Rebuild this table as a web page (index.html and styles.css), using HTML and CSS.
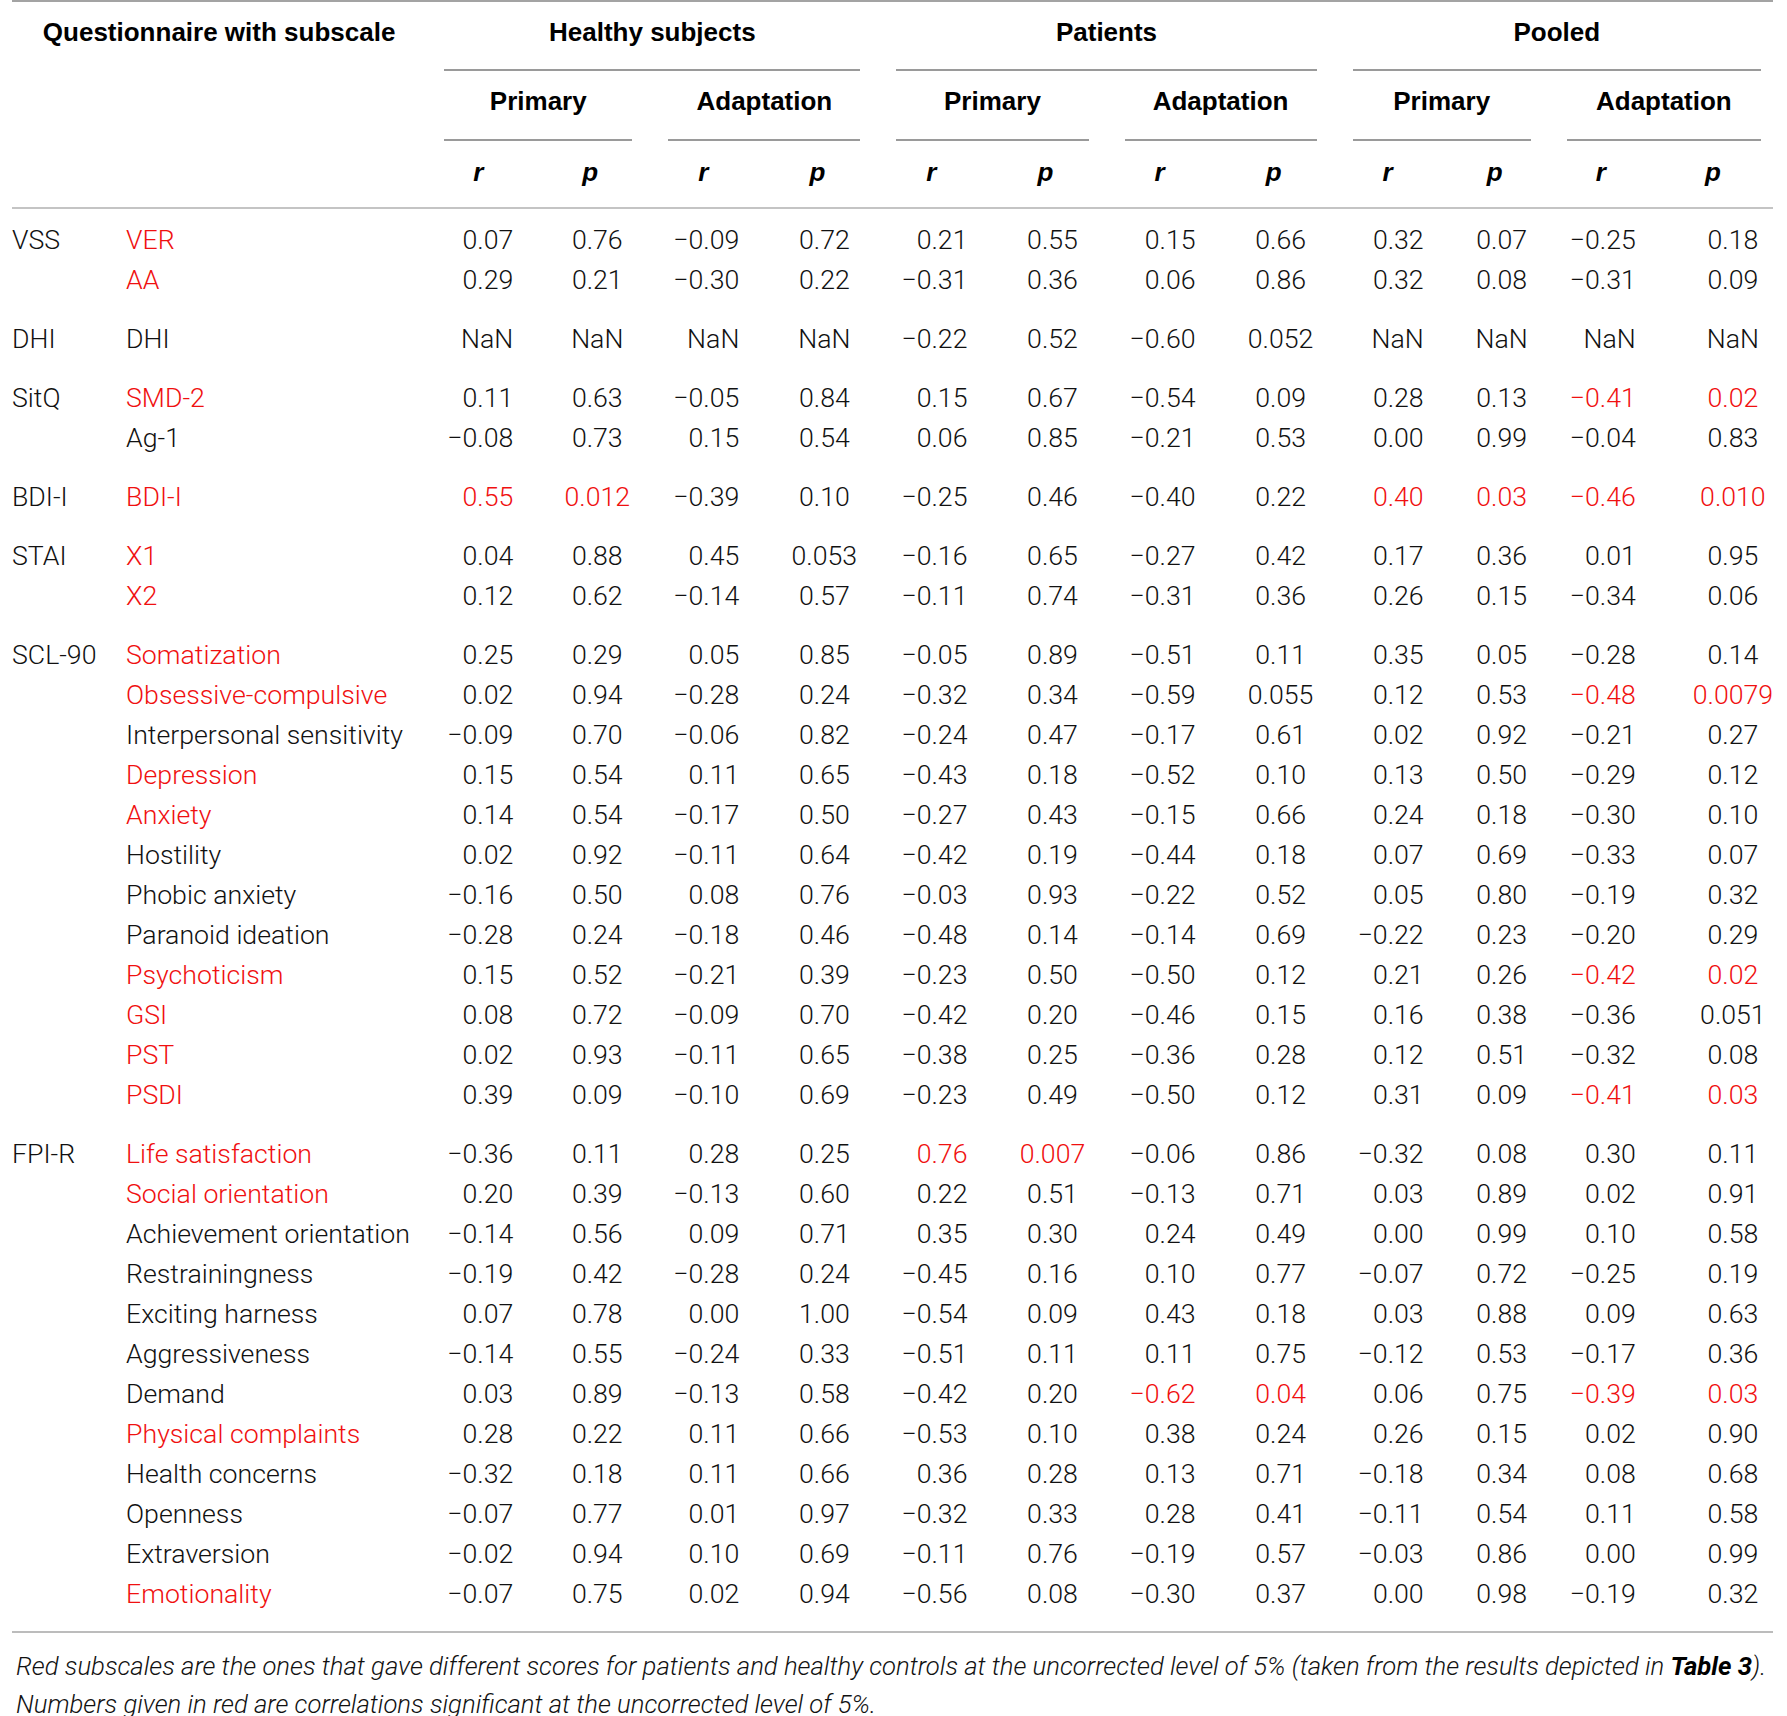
FILE: index.html
```html
<!DOCTYPE html>
<html lang="en">
<head>
    <meta charset="UTF-8">
    <meta name="viewport" content="width=device-width, initial-scale=1.0">
    <link rel="stylesheet" href="styles.css">
</head>
<body>

<!-- Correlation table -->
<table class="corr">
    <colgroup>
        <col style="width:114px"><col style="width:300px">
        <col style="width:104px"><col style="width:120px">
        <col style="width:106px"><col style="width:122px">
        <col style="width:106px"><col style="width:122px">
        <col style="width:106px"><col style="width:122px">
        <col style="width:106px"><col style="width:108px">
        <col style="width:104px"><col style="width:120px">
    </colgroup>
    <thead>
        <tr class="h1">
            <th colspan="2" class="title">Questionnaire with subscale</th>
            <th colspan="4"><div class="grp">Healthy subjects</div></th>
            <th colspan="4"><div class="grp">Patients</div></th>
            <th colspan="4"><div class="grp end">Pooled</div></th>
        </tr>
        <tr class="h2">
            <th colspan="2"></th>
            <th colspan="2"><div class="sub">Primary</div></th>
            <th colspan="2"><div class="sub">Adaptation</div></th>
            <th colspan="2"><div class="sub">Primary</div></th>
            <th colspan="2"><div class="sub">Adaptation</div></th>
            <th colspan="2"><div class="sub">Primary</div></th>
            <th colspan="2"><div class="sub end">Adaptation</div></th>
        </tr>
        <tr class="h3">
            <th></th><th></th>
            <th>r</th><th>p</th><th>r</th><th>p</th>
            <th>r</th><th>p</th><th>r</th><th>p</th>
            <th>r</th><th>p</th><th>r</th><th>p</th>
        </tr>
    </thead>
    <tbody>
        <tr class="first">
            <td class="q">VSS</td><td class="s hi">VER</td>
            <td class="r">0.07</td><td class="p">0.76</td><td class="r">&minus;0.09</td><td class="p">0.72</td>
            <td class="r">0.21</td><td class="p">0.55</td><td class="r">0.15</td><td class="p">0.66</td>
            <td class="r">0.32</td><td class="p">0.07</td><td class="r">&minus;0.25</td><td class="p">0.18</td>
        </tr>
        <tr>
            <td class="q"></td><td class="s hi">AA</td>
            <td class="r">0.29</td><td class="p">0.21</td><td class="r">&minus;0.30</td><td class="p">0.22</td>
            <td class="r">&minus;0.31</td><td class="p">0.36</td><td class="r">0.06</td><td class="p">0.86</td>
            <td class="r">0.32</td><td class="p">0.08</td><td class="r">&minus;0.31</td><td class="p">0.09</td>
        </tr>

        <tr class="gs">
            <td class="q">DHI</td><td class="s">DHI</td>
            <td class="r">NaN</td><td class="p">NaN</td><td class="r">NaN</td><td class="p">NaN</td>
            <td class="r">&minus;0.22</td><td class="p">0.52</td><td class="r">&minus;0.60</td><td class="p">0.052</td>
            <td class="r">NaN</td><td class="p">NaN</td><td class="r">NaN</td><td class="p">NaN</td>
        </tr>

        <tr class="gs">
            <td class="q">SitQ</td><td class="s hi">SMD-2</td>
            <td class="r">0.11</td><td class="p">0.63</td><td class="r">&minus;0.05</td><td class="p">0.84</td>
            <td class="r">0.15</td><td class="p">0.67</td><td class="r">&minus;0.54</td><td class="p">0.09</td>
            <td class="r">0.28</td><td class="p">0.13</td><td class="r hi">&minus;0.41</td><td class="p hi">0.02</td>
        </tr>
        <tr>
            <td class="q"></td><td class="s">Ag-1</td>
            <td class="r">&minus;0.08</td><td class="p">0.73</td><td class="r">0.15</td><td class="p">0.54</td>
            <td class="r">0.06</td><td class="p">0.85</td><td class="r">&minus;0.21</td><td class="p">0.53</td>
            <td class="r">0.00</td><td class="p">0.99</td><td class="r">&minus;0.04</td><td class="p">0.83</td>
        </tr>

        <tr class="gs">
            <td class="q">BDI-I</td><td class="s hi">BDI-I</td>
            <td class="r hi">0.55</td><td class="p hi">0.012</td><td class="r">&minus;0.39</td><td class="p">0.10</td>
            <td class="r">&minus;0.25</td><td class="p">0.46</td><td class="r">&minus;0.40</td><td class="p">0.22</td>
            <td class="r hi">0.40</td><td class="p hi">0.03</td><td class="r hi">&minus;0.46</td><td class="p hi">0.010</td>
        </tr>

        <tr class="gs">
            <td class="q">STAI</td><td class="s hi">X1</td>
            <td class="r">0.04</td><td class="p">0.88</td><td class="r">0.45</td><td class="p">0.053</td>
            <td class="r">&minus;0.16</td><td class="p">0.65</td><td class="r">&minus;0.27</td><td class="p">0.42</td>
            <td class="r">0.17</td><td class="p">0.36</td><td class="r">0.01</td><td class="p">0.95</td>
        </tr>
        <tr>
            <td class="q"></td><td class="s hi">X2</td>
            <td class="r">0.12</td><td class="p">0.62</td><td class="r">&minus;0.14</td><td class="p">0.57</td>
            <td class="r">&minus;0.11</td><td class="p">0.74</td><td class="r">&minus;0.31</td><td class="p">0.36</td>
            <td class="r">0.26</td><td class="p">0.15</td><td class="r">&minus;0.34</td><td class="p">0.06</td>
        </tr>

        <tr class="gs">
            <td class="q">SCL-90</td><td class="s hi">Somatization</td>
            <td class="r">0.25</td><td class="p">0.29</td><td class="r">0.05</td><td class="p">0.85</td>
            <td class="r">&minus;0.05</td><td class="p">0.89</td><td class="r">&minus;0.51</td><td class="p">0.11</td>
            <td class="r">0.35</td><td class="p">0.05</td><td class="r">&minus;0.28</td><td class="p">0.14</td>
        </tr>
        <tr>
            <td class="q"></td><td class="s hi">Obsessive-compulsive</td>
            <td class="r">0.02</td><td class="p">0.94</td><td class="r">&minus;0.28</td><td class="p">0.24</td>
            <td class="r">&minus;0.32</td><td class="p">0.34</td><td class="r">&minus;0.59</td><td class="p">0.055</td>
            <td class="r">0.12</td><td class="p">0.53</td><td class="r hi">&minus;0.48</td><td class="p hi">0.0079</td>
        </tr>
        <tr>
            <td class="q"></td><td class="s">Interpersonal sensitivity</td>
            <td class="r">&minus;0.09</td><td class="p">0.70</td><td class="r">&minus;0.06</td><td class="p">0.82</td>
            <td class="r">&minus;0.24</td><td class="p">0.47</td><td class="r">&minus;0.17</td><td class="p">0.61</td>
            <td class="r">0.02</td><td class="p">0.92</td><td class="r">&minus;0.21</td><td class="p">0.27</td>
        </tr>
        <tr>
            <td class="q"></td><td class="s hi">Depression</td>
            <td class="r">0.15</td><td class="p">0.54</td><td class="r">0.11</td><td class="p">0.65</td>
            <td class="r">&minus;0.43</td><td class="p">0.18</td><td class="r">&minus;0.52</td><td class="p">0.10</td>
            <td class="r">0.13</td><td class="p">0.50</td><td class="r">&minus;0.29</td><td class="p">0.12</td>
        </tr>
        <tr>
            <td class="q"></td><td class="s hi">Anxiety</td>
            <td class="r">0.14</td><td class="p">0.54</td><td class="r">&minus;0.17</td><td class="p">0.50</td>
            <td class="r">&minus;0.27</td><td class="p">0.43</td><td class="r">&minus;0.15</td><td class="p">0.66</td>
            <td class="r">0.24</td><td class="p">0.18</td><td class="r">&minus;0.30</td><td class="p">0.10</td>
        </tr>
        <tr>
            <td class="q"></td><td class="s">Hostility</td>
            <td class="r">0.02</td><td class="p">0.92</td><td class="r">&minus;0.11</td><td class="p">0.64</td>
            <td class="r">&minus;0.42</td><td class="p">0.19</td><td class="r">&minus;0.44</td><td class="p">0.18</td>
            <td class="r">0.07</td><td class="p">0.69</td><td class="r">&minus;0.33</td><td class="p">0.07</td>
        </tr>
        <tr>
            <td class="q"></td><td class="s">Phobic anxiety</td>
            <td class="r">&minus;0.16</td><td class="p">0.50</td><td class="r">0.08</td><td class="p">0.76</td>
            <td class="r">&minus;0.03</td><td class="p">0.93</td><td class="r">&minus;0.22</td><td class="p">0.52</td>
            <td class="r">0.05</td><td class="p">0.80</td><td class="r">&minus;0.19</td><td class="p">0.32</td>
        </tr>
        <tr>
            <td class="q"></td><td class="s">Paranoid ideation</td>
            <td class="r">&minus;0.28</td><td class="p">0.24</td><td class="r">&minus;0.18</td><td class="p">0.46</td>
            <td class="r">&minus;0.48</td><td class="p">0.14</td><td class="r">&minus;0.14</td><td class="p">0.69</td>
            <td class="r">&minus;0.22</td><td class="p">0.23</td><td class="r">&minus;0.20</td><td class="p">0.29</td>
        </tr>
        <tr>
            <td class="q"></td><td class="s hi">Psychoticism</td>
            <td class="r">0.15</td><td class="p">0.52</td><td class="r">&minus;0.21</td><td class="p">0.39</td>
            <td class="r">&minus;0.23</td><td class="p">0.50</td><td class="r">&minus;0.50</td><td class="p">0.12</td>
            <td class="r">0.21</td><td class="p">0.26</td><td class="r hi">&minus;0.42</td><td class="p hi">0.02</td>
        </tr>
        <tr>
            <td class="q"></td><td class="s hi">GSI</td>
            <td class="r">0.08</td><td class="p">0.72</td><td class="r">&minus;0.09</td><td class="p">0.70</td>
            <td class="r">&minus;0.42</td><td class="p">0.20</td><td class="r">&minus;0.46</td><td class="p">0.15</td>
            <td class="r">0.16</td><td class="p">0.38</td><td class="r">&minus;0.36</td><td class="p">0.051</td>
        </tr>
        <tr>
            <td class="q"></td><td class="s hi">PST</td>
            <td class="r">0.02</td><td class="p">0.93</td><td class="r">&minus;0.11</td><td class="p">0.65</td>
            <td class="r">&minus;0.38</td><td class="p">0.25</td><td class="r">&minus;0.36</td><td class="p">0.28</td>
            <td class="r">0.12</td><td class="p">0.51</td><td class="r">&minus;0.32</td><td class="p">0.08</td>
        </tr>
        <tr>
            <td class="q"></td><td class="s hi">PSDI</td>
            <td class="r">0.39</td><td class="p">0.09</td><td class="r">&minus;0.10</td><td class="p">0.69</td>
            <td class="r">&minus;0.23</td><td class="p">0.49</td><td class="r">&minus;0.50</td><td class="p">0.12</td>
            <td class="r">0.31</td><td class="p">0.09</td><td class="r hi">&minus;0.41</td><td class="p hi">0.03</td>
        </tr>

        <tr class="gs">
            <td class="q">FPI-R</td><td class="s hi">Life satisfaction</td>
            <td class="r">&minus;0.36</td><td class="p">0.11</td><td class="r">0.28</td><td class="p">0.25</td>
            <td class="r hi">0.76</td><td class="p hi">0.007</td><td class="r">&minus;0.06</td><td class="p">0.86</td>
            <td class="r">&minus;0.32</td><td class="p">0.08</td><td class="r">0.30</td><td class="p">0.11</td>
        </tr>
        <tr>
            <td class="q"></td><td class="s hi">Social orientation</td>
            <td class="r">0.20</td><td class="p">0.39</td><td class="r">&minus;0.13</td><td class="p">0.60</td>
            <td class="r">0.22</td><td class="p">0.51</td><td class="r">&minus;0.13</td><td class="p">0.71</td>
            <td class="r">0.03</td><td class="p">0.89</td><td class="r">0.02</td><td class="p">0.91</td>
        </tr>
        <tr>
            <td class="q"></td><td class="s">Achievement orientation</td>
            <td class="r">&minus;0.14</td><td class="p">0.56</td><td class="r">0.09</td><td class="p">0.71</td>
            <td class="r">0.35</td><td class="p">0.30</td><td class="r">0.24</td><td class="p">0.49</td>
            <td class="r">0.00</td><td class="p">0.99</td><td class="r">0.10</td><td class="p">0.58</td>
        </tr>
        <tr>
            <td class="q"></td><td class="s">Restrainingness</td>
            <td class="r">&minus;0.19</td><td class="p">0.42</td><td class="r">&minus;0.28</td><td class="p">0.24</td>
            <td class="r">&minus;0.45</td><td class="p">0.16</td><td class="r">0.10</td><td class="p">0.77</td>
            <td class="r">&minus;0.07</td><td class="p">0.72</td><td class="r">&minus;0.25</td><td class="p">0.19</td>
        </tr>
        <tr>
            <td class="q"></td><td class="s">Exciting harness</td>
            <td class="r">0.07</td><td class="p">0.78</td><td class="r">0.00</td><td class="p">1.00</td>
            <td class="r">&minus;0.54</td><td class="p">0.09</td><td class="r">0.43</td><td class="p">0.18</td>
            <td class="r">0.03</td><td class="p">0.88</td><td class="r">0.09</td><td class="p">0.63</td>
        </tr>
        <tr>
            <td class="q"></td><td class="s">Aggressiveness</td>
            <td class="r">&minus;0.14</td><td class="p">0.55</td><td class="r">&minus;0.24</td><td class="p">0.33</td>
            <td class="r">&minus;0.51</td><td class="p">0.11</td><td class="r">0.11</td><td class="p">0.75</td>
            <td class="r">&minus;0.12</td><td class="p">0.53</td><td class="r">&minus;0.17</td><td class="p">0.36</td>
        </tr>
        <tr>
            <td class="q"></td><td class="s">Demand</td>
            <td class="r">0.03</td><td class="p">0.89</td><td class="r">&minus;0.13</td><td class="p">0.58</td>
            <td class="r">&minus;0.42</td><td class="p">0.20</td><td class="r hi">&minus;0.62</td><td class="p hi">0.04</td>
            <td class="r">0.06</td><td class="p">0.75</td><td class="r hi">&minus;0.39</td><td class="p hi">0.03</td>
        </tr>
        <tr>
            <td class="q"></td><td class="s hi">Physical complaints</td>
            <td class="r">0.28</td><td class="p">0.22</td><td class="r">0.11</td><td class="p">0.66</td>
            <td class="r">&minus;0.53</td><td class="p">0.10</td><td class="r">0.38</td><td class="p">0.24</td>
            <td class="r">0.26</td><td class="p">0.15</td><td class="r">0.02</td><td class="p">0.90</td>
        </tr>
        <tr>
            <td class="q"></td><td class="s">Health concerns</td>
            <td class="r">&minus;0.32</td><td class="p">0.18</td><td class="r">0.11</td><td class="p">0.66</td>
            <td class="r">0.36</td><td class="p">0.28</td><td class="r">0.13</td><td class="p">0.71</td>
            <td class="r">&minus;0.18</td><td class="p">0.34</td><td class="r">0.08</td><td class="p">0.68</td>
        </tr>
        <tr>
            <td class="q"></td><td class="s">Openness</td>
            <td class="r">&minus;0.07</td><td class="p">0.77</td><td class="r">0.01</td><td class="p">0.97</td>
            <td class="r">&minus;0.32</td><td class="p">0.33</td><td class="r">0.28</td><td class="p">0.41</td>
            <td class="r">&minus;0.11</td><td class="p">0.54</td><td class="r">0.11</td><td class="p">0.58</td>
        </tr>
        <tr>
            <td class="q"></td><td class="s">Extraversion</td>
            <td class="r">&minus;0.02</td><td class="p">0.94</td><td class="r">0.10</td><td class="p">0.69</td>
            <td class="r">&minus;0.11</td><td class="p">0.76</td><td class="r">&minus;0.19</td><td class="p">0.57</td>
            <td class="r">&minus;0.03</td><td class="p">0.86</td><td class="r">0.00</td><td class="p">0.99</td>
        </tr>
        <tr class="last">
            <td class="q"></td><td class="s hi">Emotionality</td>
            <td class="r">&minus;0.07</td><td class="p">0.75</td><td class="r">0.02</td><td class="p">0.94</td>
            <td class="r">&minus;0.56</td><td class="p">0.08</td><td class="r">&minus;0.30</td><td class="p">0.37</td>
            <td class="r">0.00</td><td class="p">0.98</td><td class="r">&minus;0.19</td><td class="p">0.32</td>
        </tr>
    </tbody>
</table>

<!-- Footnote -->
<p class="note">Red subscales are the ones that gave different scores for patients and healthy controls at the uncorrected level of 5% (taken from the results depicted in <b>Table 3</b>).<br>Numbers given in red are correlations significant at the uncorrected level of 5%.</p>

</body>
</html>
```

FILE: styles.css
```css
body {
    margin: 0;
    background-color: #fff;
    color: #111;
    font-family: Roboto, "Liberation Sans", Arial, sans-serif;
}

/* Correlation table */
.corr {
    border-collapse: separate;
    border-spacing: 0;
    table-layout: fixed;
    width: 1761px;
    margin-left: 12px;
    border-top: 2px solid #a3a3a3;
    font-size: 26.7px;
}
.corr th {
    padding: 0;
    font-family: "Liberation Sans", Arial, sans-serif;
    font-size: 26px;
    font-weight: bold;
    line-height: 32px;
    text-align: center;
    color: #000;
}
.h1 th {
    vertical-align: top;
}
.h1 .title {
    padding-top: 14px;
}
.grp {
    margin: 0 18px;
    padding: 14px 0 21px;
    border-bottom: 2px solid #9a9a9a;
}
.sub {
    margin: 0 18px;
    padding: 14px 0 22px;
    border-bottom: 2px solid #9a9a9a;
}
.grp.end,
.sub.end {
    margin-right: 12px;
}
.h3 th {
    padding: 15px 0 19px;
    font-style: italic;
    border-bottom: 2px solid #c4c4c4;
}

/* Body rows */
.corr td {
    padding: 0;
    line-height: 40px;
    font-weight: 300;
    white-space: nowrap;
    vertical-align: middle;
}
.corr td.r {
    text-align: right;
    padding-right: 17px;
}
.corr td.p {
    text-align: center;
    padding-left: 14px;
}
.corr td.p:last-child {
    padding-left: 40px;
}
.corr .hi {
    color: #f01010;
}
.corr tr.first td {
    padding-top: 11px;
}
.corr tr.gs td {
    padding-top: 19px;
}
.corr tr.last td {
    padding-bottom: 17px;
    border-bottom: 2px solid #bcbcbc;
}

/* Footnote */
.note {
    margin: 14px 0 0 16px;
    font-size: 25.7px;
    line-height: 38px;
    font-style: italic;
    font-weight: 300;
    color: #111;
}
.note b {
    font-weight: bold;
    color: #000;
}
```
